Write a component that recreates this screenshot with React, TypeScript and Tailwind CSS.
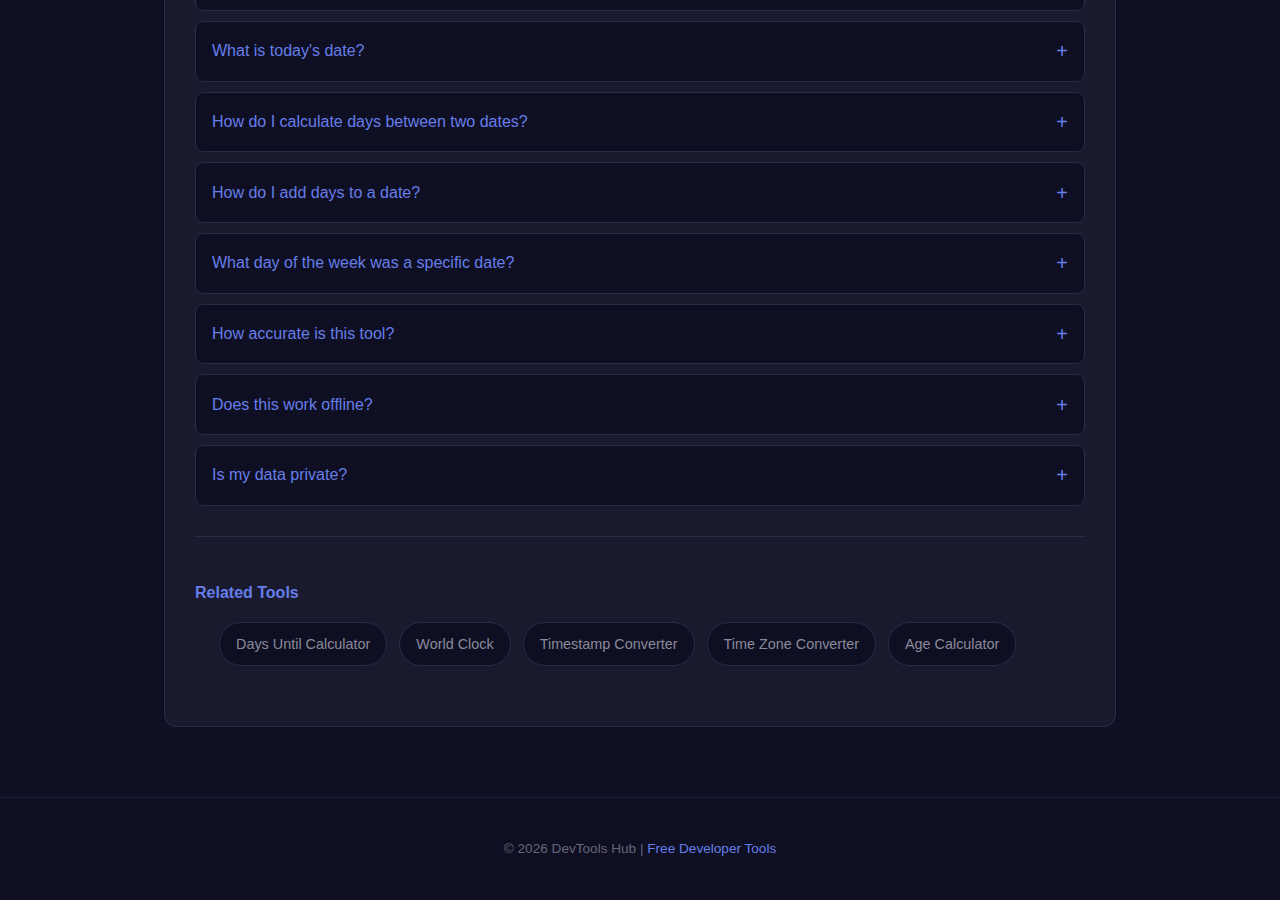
import React, { useState } from 'react';

const faqs = [
  { q: 'What is a date calculator?', a: 'A date calculator helps you work out dates, differences between dates and days of the week.' },
  { q: "What is today's date?", a: 'The tool shows the current date based on your device clock and time zone.' },
  { q: 'How do I calculate days between two dates?', a: 'Pick a start date and an end date, and the difference is shown in days, weeks and months.' },
  { q: 'How do I add days to a date?', a: 'Choose a date, enter a number of days to add or subtract, and the result appears instantly.' },
  { q: 'What day of the week was a specific date?', a: 'Enter any date and the weekday is calculated for you.' },
  { q: 'How accurate is this tool?', a: 'Calculations follow the Gregorian calendar, including leap years.' },
  { q: 'Does this work offline?', a: 'Yes. Once the page is loaded, everything runs in your browser.' },
  { q: 'Is my data private?', a: 'Nothing you enter is sent to a server. All calculations happen locally.' },
];

const relatedTools = ['Days Until Calculator', 'World Clock', 'Timestamp Converter', 'Time Zone Converter', 'Age Calculator'];

const FaqItem: React.FC<{ q: string; a: string }> = ({ q, a }) => {
  const [open, setOpen] = useState(false);
  return (
    <div className="mb-[10px] bg-[#0f0f23] border border-[#2a2a4a] rounded-lg overflow-hidden">
      <button
        onClick={() => setOpen(!open)}
        className="w-full flex items-center justify-between px-4 py-[17.35px] text-left text-[16px] leading-[24px] text-[#667eea]"
      >
        <span>{q}</span>
        <span className="text-[20px] leading-[24px] font-light">{open ? '−' : '+'}</span>
      </button>
      {open && <div className="px-4 pb-4 text-[15px] text-[#a0a0b8]">{a}</div>}
    </div>
  );
};

export default function App() {
  return (
    <div className="min-h-[900px] bg-[#0f0f23] overflow-hidden" style={{ fontFamily: '"Liberation Sans", Arial, sans-serif' }}>
      <main className="w-[952px] mx-auto -mt-[80.7px]">
        <div className="bg-[#1a1a2e] border border-[#2a2a4a] rounded-xl p-[30px]">
          <section>
            {faqs.map((f) => (
              <FaqItem key={f.q} q={f.q} a={f.a} />
            ))}
          </section>

          <div className="mt-[30px] border-t border-[#2a2a4a]" />

          <section className="pt-[40px] pb-[30px]">
            <h3 className="text-[16px] leading-[24px] font-bold text-[#667eea] mt-[4px] mb-[17px]">Related Tools</h3>
            <ul className="flex flex-wrap gap-3 pl-6">
              {relatedTools.map((t) => (
                <li key={t}>
                  <a
                    href="#"
                    className="block px-4 py-[11px] text-[14.4px] leading-[20px] text-[#8a8a9a] bg-[#0f0f23] border border-[#2a2a4a] rounded-full hover:text-[#667eea]"
                  >
                    {t}
                  </a>
                </li>
              ))}
            </ul>
          </section>
        </div>
      </main>

      <footer className="mt-[70px] border-t border-[#1e1e35] pt-[41px] pb-10 text-center text-[13.6px] leading-[20px] text-[#666677]">
        © 2026 DevTools Hub | <a href="#" className="text-[#667eea]">Free Developer Tools</a>
      </footer>
    </div>
  );
}
